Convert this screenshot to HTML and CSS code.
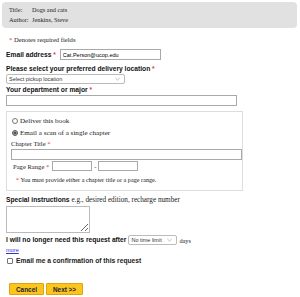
FILE: index.html
```
<!DOCTYPE html>
<html lang="en">
<head>
  <meta charset="UTF-8">
  <meta name="viewport" content="width=device-width, initial-scale=1.0">
  <title>Request a scan</title>
  <link rel="stylesheet" href="styles.css">
</head>
<body>
  <div class="record">
    <div class="rec-row"><span class="rec-key">Title:</span><span>Dogs and cats</span></div>
    <div class="rec-row"><span class="rec-key">Author:</span><span>Jenkins, Steve</span></div>
  </div>

  <form class="request">
    <p class="req-note"><span class="req">*</span> Denotes required fields</p>

    <div class="field inline">
      <label class="lbl" for="email">Email address <span class="req">*</span></label>
      <input type="text" id="email" class="txt email" value="Cat.Person@ucop.edu">
    </div>

    <div class="field">
      <label class="lbl" for="pickup">Please select your preferred delivery location <span class="req">*</span></label>
      <span class="selwrap pickup">
        <select id="pickup" class="sel"><option>Select pickup location</option></select>
        <svg class="chev" viewBox="0 0 6 4"><path d="M0.5 0.8 L3 3.2 L5.5 0.8" fill="none" stroke="#999" stroke-width="0.8"/></svg>
      </span>
    </div>

    <div class="field dept-field">
      <label class="lbl" for="dept">Your department or major <span class="req">*</span></label>
      <input type="text" id="dept" class="txt dept">
    </div>

    <fieldset class="choice">
      <label class="opt"><input type="radio" name="kind"> Deliver this book</label>
      <label class="opt"><input type="radio" name="kind" checked> Email a scan of a single chapter</label>
      <div class="chap">
        <label class="plain" for="chapter">Chapter Title <span class="req">*</span></label>
        <input type="text" id="chapter" class="txt chapter">
      </div>
      <div class="range">
        <label class="plain" for="from">Page Range <span class="req">*</span></label>
        <input type="text" id="from" class="txt page">
        <span>-</span>
        <input type="text" class="txt page">
      </div>
      <p class="hint"><span class="req">*</span> You must provide either a chapter title or a page range.</p>
    </fieldset>

    <div class="field">
      <label class="lbl" for="notes">Special instructions <span class="plain eg">e.g., desired edition, recharge number</span></label>
      <textarea id="notes" class="notes"></textarea>
    </div>

    <div class="field inline after">
      <label class="lbl" for="limit">I will no longer need this request after</label>
      <span class="selwrap limit">
        <select id="limit" class="sel"><option>No time limit</option></select>
        <svg class="chev" viewBox="0 0 6 4"><path d="M0.5 0.8 L3 3.2 L5.5 0.8" fill="none" stroke="#999" stroke-width="0.8"/></svg>
      </span>
      <span class="plain days">days</span>
    </div>
    <a href="#" class="more">more</a>

    <label class="confirm"><input type="checkbox" class="box"> Email me a confirmation of this request</label>

    <div class="buttons">
      <button type="button" class="btn">Cancel</button>
      <button type="button" class="btn">Next &gt;&gt;</button>
    </div>
  </form>
</body>
</html>
```

FILE: styles.css
```
body { margin: 0; padding: 2px 3px 0 2px; background: #fff; color: #222; font-family: "Liberation Serif", serif; font-size: 6.6px; }
.record { background: #e1e1e1; border-radius: 4px; padding: 3px 7px; }
.rec-row { line-height: 10px; font-size: 6.3px; }
.rec-key { display: inline-block; width: 23px; }
.req { color: #e33; }

.request { padding: 0 4px; }
.req-note { margin: 7px 0 0 3px; line-height: 10px; }

.lbl { font-family: "Liberation Sans", Arial, sans-serif; font-weight: bold; font-size: 6.7px; color: #111; }
.plain { font-family: "Liberation Serif", serif; font-weight: normal; font-size: 6.6px; color: #222; }
.plain.eg { font-size: 7.2px; }
.plain.days { font-size: 6.3px; }
.field { margin-top: 4px; }
.field .lbl { display: block; line-height: 10px; }
.field.inline { display: flex; align-items: center; gap: 4px; }
.field.inline .lbl { display: inline; }
.dept-field { margin-top: 1px; }

.txt, .sel, .notes {
  box-sizing: border-box;
  border: 1px solid #a9a9a9;
  background: #fff;
  font-family: "Liberation Sans", Arial, sans-serif;
  font-size: 5.5px;
  padding: 0 2px;
  margin: 0;
}
.txt { height: 11px; }
.email { width: 101px; }

.selwrap { position: relative; display: inline-block; height: 10px; }
.sel { appearance: none; -webkit-appearance: none; width: 100%; height: 10px; border-radius: 2px; border-color: #bbb; color: #333; }
.chev { position: absolute; right: 5px; top: 3px; width: 5px; height: 4px; }
.pickup { display: block; width: 119px; }
.limit { width: 49px; }
.dept { width: 231px; display: block; }

.choice { margin: 5px 0 0 0; padding: 3px 0 5px 4px; width: 235px; box-sizing: border-box; border: 1px solid #ddd; }
.opt { display: flex; align-items: center; gap: 1px; line-height: 12px; font-size: 7.1px; }
.opt input { margin: 0 1px 0 1px; width: 6px; height: 6px; accent-color: #555; }
.chap .plain { display: block; line-height: 10px; }
.chapter { width: 231px; display: block; }
.range { display: flex; align-items: center; gap: 2px; margin-top: 1px; padding-left: 2px; }
.range .plain { margin-right: 1px; }
.page { width: 40px; height: 10px; }
.hint { margin: 4px 0 0 5px; line-height: 10px; font-size: 6.2px; }

.notes { display: block; width: 84px; height: 27px; margin-top: 1px; resize: both; border-color: #bbb; }
.field.after { margin-top: 2px; gap: 2px; }
.more { display: block; margin-top: 1px; color: #33c; font-family: "Liberation Sans", Arial, sans-serif; font-size: 5.6px; line-height: 9px; }

.confirm { display: flex; align-items: center; gap: 3px; margin-top: 2px; font-family: "Liberation Sans", Arial, sans-serif; font-weight: bold; font-size: 6.7px; }
.box { appearance: none; -webkit-appearance: none; margin: 0 0 0 1px; width: 6px; height: 6px; border: 1px solid #777; border-radius: 1px; background: #fff; }

.buttons { display: flex; gap: 2px; margin-top: 19px; padding-left: 3px; }
.btn {
  background: #fcc51c;
  border: 1px solid #d9a514;
  border-radius: 1px;
  font-family: "Liberation Sans", Arial, sans-serif;
  font-weight: bold;
  font-size: 6.4px;
  color: #223;
  height: 12px;
  padding: 0 6px;
}
```
